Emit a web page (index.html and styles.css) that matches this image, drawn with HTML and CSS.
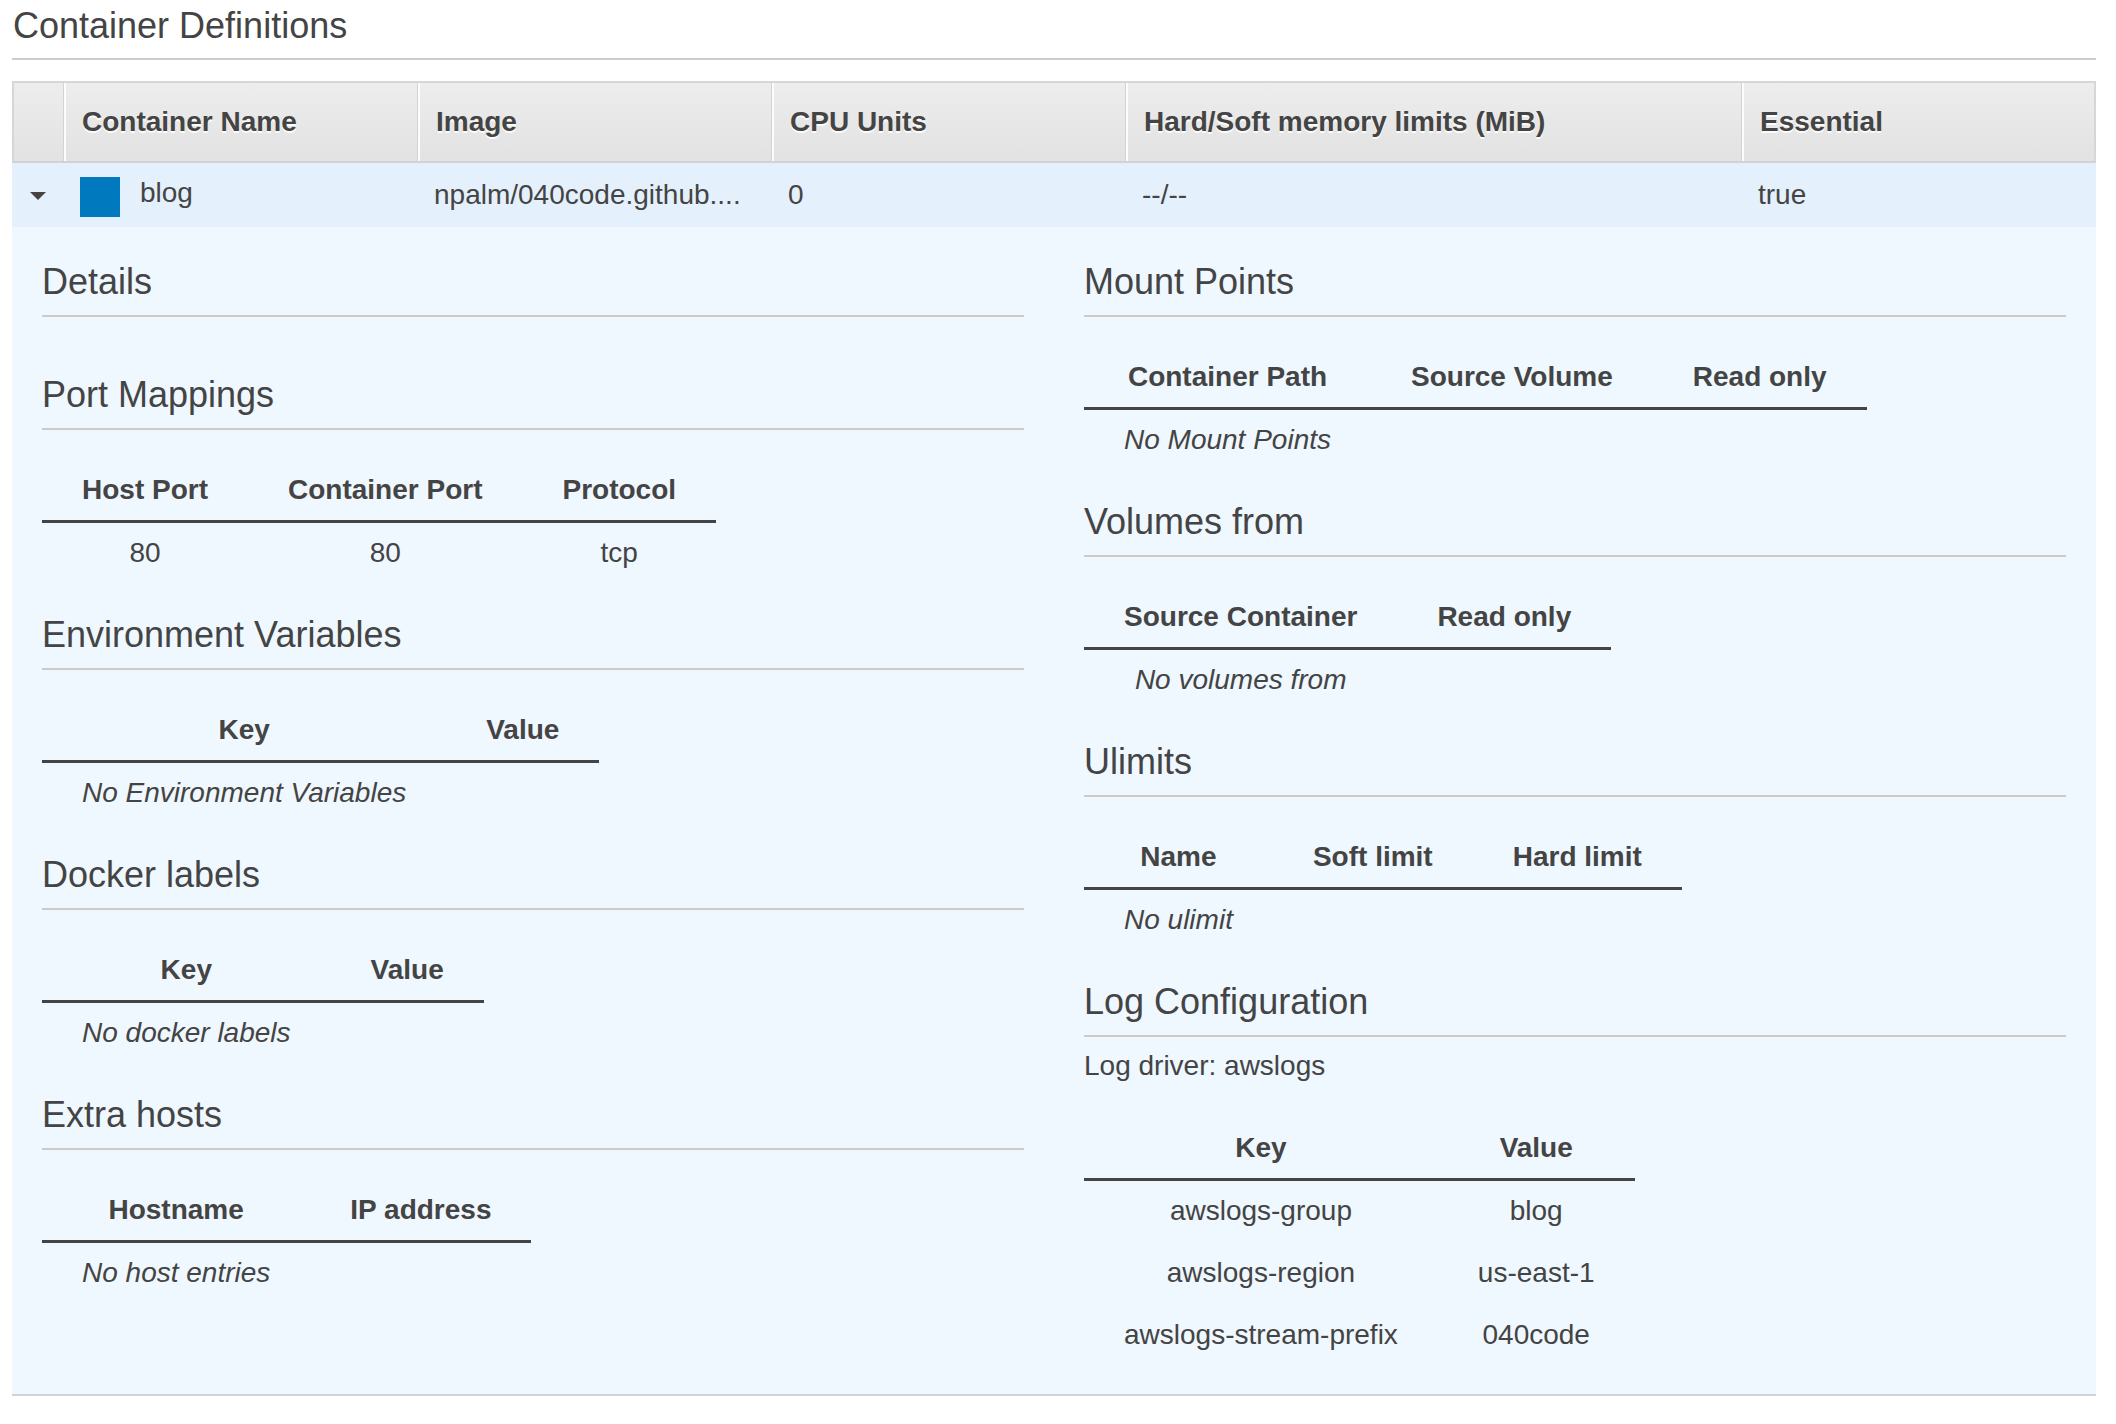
FILE: index.html
```html
<!DOCTYPE html>
<html lang="en">
<head>
<meta charset="utf-8">
<title>Container Definitions</title>
<link rel="stylesheet" href="styles.css">
</head>
<body>
<div class="page">
  <h2 class="page-title">Container Definitions</h2>
  <table class="grid">
    <colgroup>
      <col class="c-toggle">
      <col class="c-std">
      <col class="c-std">
      <col class="c-std">
      <col class="c-wide">
      <col>
    </colgroup>
    <thead>
      <tr>
        <th class="gh gh-first"></th>
        <th class="gh">Container Name</th>
        <th class="gh">Image</th>
        <th class="gh">CPU Units</th>
        <th class="gh">Hard/Soft memory limits (MiB)</th>
        <th class="gh gh-last">Essential</th>
      </tr>
    </thead>
    <tbody>
      <tr class="row-selected">
        <td class="gc toggle"><span class="caret"></span></td>
        <td class="gc"><span class="swatch"></span>blog</td>
        <td class="gc">npalm/040code.github....</td>
        <td class="gc">0</td>
        <td class="gc">--/--</td>
        <td class="gc">true</td>
      </tr>
      <tr class="row-detail">
        <td class="detail-cell" colspan="6">
          <div class="detail">
            <div class="detail-col">
              <section class="section section-empty">
                <h3 class="section-title">Details</h3>
              </section>
              <section class="section">
                <h3 class="section-title">Port Mappings</h3>
                <table class="kv">
                  <thead><tr><th>Host Port</th><th>Container Port</th><th>Protocol</th></tr></thead>
                  <tbody><tr><td>80</td><td>80</td><td>tcp</td></tr></tbody>
                </table>
              </section>
              <section class="section">
                <h3 class="section-title">Environment Variables</h3>
                <table class="kv">
                  <thead><tr><th>Key</th><th>Value</th></tr></thead>
                  <tbody><tr><td class="empty">No Environment Variables</td><td></td></tr></tbody>
                </table>
              </section>
              <section class="section">
                <h3 class="section-title">Docker labels</h3>
                <table class="kv">
                  <thead><tr><th>Key</th><th>Value</th></tr></thead>
                  <tbody><tr><td class="empty">No docker labels</td><td></td></tr></tbody>
                </table>
              </section>
              <section class="section">
                <h3 class="section-title">Extra hosts</h3>
                <table class="kv">
                  <thead><tr><th>Hostname</th><th>IP address</th></tr></thead>
                  <tbody><tr><td class="empty">No host entries</td><td></td></tr></tbody>
                </table>
              </section>
            </div>
            <div class="detail-col">
              <section class="section">
                <h3 class="section-title">Mount Points</h3>
                <table class="kv">
                  <thead><tr><th>Container Path</th><th>Source Volume</th><th>Read only</th></tr></thead>
                  <tbody><tr><td class="empty">No Mount Points</td><td></td><td></td></tr></tbody>
                </table>
              </section>
              <section class="section">
                <h3 class="section-title">Volumes from</h3>
                <table class="kv">
                  <thead><tr><th>Source Container</th><th>Read only</th></tr></thead>
                  <tbody><tr><td class="empty">No volumes from</td><td></td></tr></tbody>
                </table>
              </section>
              <section class="section">
                <h3 class="section-title">Ulimits</h3>
                <table class="kv">
                  <thead><tr><th>Name</th><th>Soft limit</th><th>Hard limit</th></tr></thead>
                  <tbody><tr><td class="empty">No ulimit</td><td></td><td></td></tr></tbody>
                </table>
              </section>
              <section class="section">
                <h3 class="section-title">Log Configuration</h3>
                <p class="log-driver">Log driver: awslogs</p>
                <table class="kv kv-log">
                  <thead><tr><th>Key</th><th>Value</th></tr></thead>
                  <tbody>
                    <tr><td>awslogs-group</td><td>blog</td></tr>
                    <tr><td>awslogs-region</td><td>us-east-1</td></tr>
                    <tr><td>awslogs-stream-prefix</td><td>040code</td></tr>
                  </tbody>
                </table>
              </section>
            </div>
          </div>
        </td>
      </tr>
    </tbody>
  </table>
</div>
</body>
</html>
```
FILE: styles.css
```css
html, body {
  margin: 0;
  padding: 0;
  background: #ffffff;
}

body {
  font-family: "Helvetica Neue", Helvetica, "Liberation Sans", Arial, sans-serif;
  font-size: 28px;
  line-height: 32px;
  color: #444444;
}

.page {
  padding: 6px 20px 0 12px;
}

.page-title {
  margin: 0;
  padding: 0 0 12px 1px;
  font-size: 36px;
  line-height: 40px;
  font-weight: normal;
  color: #444444;
  border-bottom: 2px solid #cccccc;
}

/* main grid table */
.grid {
  width: 100%;
  margin-top: 21px;
  border-collapse: separate;
  border-spacing: 0;
  table-layout: fixed;
}

.c-toggle { width: 51px; }
.c-std { width: 354px; }
.c-wide { width: 616px; }

.gh {
  height: 78px;
  padding: 0 0 0 19px;
  text-align: left;
  vertical-align: middle;
  font-weight: bold;
  font-size: 28px;
  color: #444444;
  text-shadow: 0 2px 0 rgba(255, 255, 255, 0.9);
  white-space: nowrap;
  border-top: 2px solid #d6d6d6;
  border-bottom: 2px solid #d2d2d2;
  background:
    linear-gradient(to right, #d3d3d3 0, #d3d3d3 1px, #fcfcfc 1px, #fcfcfc 3px, transparent 3px),
    linear-gradient(#ededed, #e2e2e2);
}

.gh-first {
  border-left: 2px solid #d6d6d6;
  background: linear-gradient(#ededed, #e2e2e2);
}

.gh-last {
  border-right: 2px solid #d6d6d6;
}

.gc {
  height: 64px;
  padding: 0 0 0 17px;
  vertical-align: middle;
  background: #e4f0fc;
  white-space: nowrap;
  overflow: hidden;
}

.gc.toggle {
  padding: 0;
  text-align: center;
}

.caret {
  display: inline-block;
  width: 0;
  height: 0;
  border-left: 8px solid transparent;
  border-right: 8px solid transparent;
  border-top: 8px solid #444444;
  vertical-align: middle;
  margin-top: -2px;
}

.swatch {
  display: inline-block;
  width: 40px;
  height: 40px;
  background: #0079bf;
  vertical-align: middle;
  margin-right: 20px;
  margin-top: 4px;
}

.detail-cell {
  padding: 0;
  background: #eff7ff;
  border-bottom: 2px solid #d3d3d3;
}

.detail {
  display: grid;
  grid-template-columns: 1fr 1fr;
  column-gap: 60px;
  padding: 35px 30px 27px;
}

.detail-col {
  display: flex;
  flex-direction: column;
  min-width: 0;
}

.section {
  margin-bottom: 30px;
}

.section:last-child {
  margin-bottom: 0;
}

.section-empty {
  margin-bottom: 58px;
}

.section-title {
  margin: 0;
  padding: 0 0 13px;
  font-size: 36px;
  line-height: 40px;
  font-weight: normal;
  color: #444444;
  border-bottom: 2px solid #cbcbcb;
}

.kv {
  margin-top: 29px;
  border-collapse: separate;
  border-spacing: 0;
}

.kv th {
  padding: 15px 40px 14px;
  font-weight: bold;
  text-align: center;
  white-space: nowrap;
  border-bottom: 3px solid #444444;
}

.kv td {
  padding: 14px 40px 16px;
  text-align: center;
  white-space: nowrap;
}

.kv td.empty {
  font-style: italic;
}

.log-driver {
  margin: 13px 0 0;
}

.kv-log {
  margin-top: 35px;
}
```
